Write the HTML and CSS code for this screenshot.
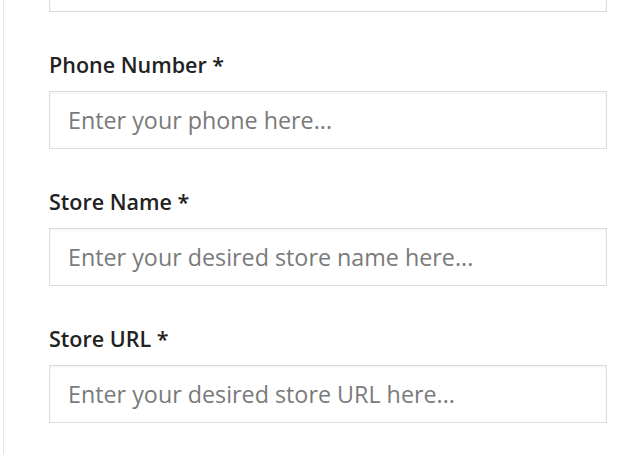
FILE: index.html
```html
<!DOCTYPE html>
<html lang="en">
<head>
  <meta charset="UTF-8">
  <title>Open Your Store</title>
  <link rel="stylesheet" href="styles.css">
</head>
<body>
  <div class="panel">
    <form class="store-form">
      <div class="field">
        <input type="text" placeholder="">
      </div>

      <div class="field">
        <label for="phone">Phone Number *</label>
        <input id="phone" type="text" placeholder="Enter your phone here...">
      </div>

      <div class="field">
        <label for="store-name">Store Name *</label>
        <input id="store-name" type="text" placeholder="Enter your desired store name here...">
      </div>

      <div class="field">
        <label for="store-url">Store URL *</label>
        <input id="store-url" type="text" placeholder="Enter your desired store URL here...">
      </div>
    </form>
  </div>
</body>
</html>
```

FILE: styles.css
```css
body {
  margin: 0;
  background: #fff;
  font-family: 'Open Sans', sans-serif;
  overflow: hidden;
}
.panel {
  box-sizing: border-box;
  height: 100vh;
  margin-left: 3px;
  border-left: 1px solid #e6e6e6;
  padding: 1px 31px 0 45px;
}
.store-form {
  margin-top: -47px;
}
label {
  display: block;
  font-size: 21.5px;
  font-weight: 600;
  color: #222;
  line-height: 30px;
  margin-top: 38px;
  margin-bottom: 11px;
}
input {
  display: block;
  box-sizing: border-box;
  width: 100%;
  height: 58px;
  padding: 0 18px;
  font-family: 'Open Sans', sans-serif;
  font-size: 23.3px;
  color: #333;
  background: #fff;
  border: 1px solid #dcdcdc;
  box-shadow: inset 0 1px 3px rgba(0,0,0,0.06);
  border-radius: 0;
  outline: none;
}
input::placeholder {
  color: #7a7a7a;
}
```
